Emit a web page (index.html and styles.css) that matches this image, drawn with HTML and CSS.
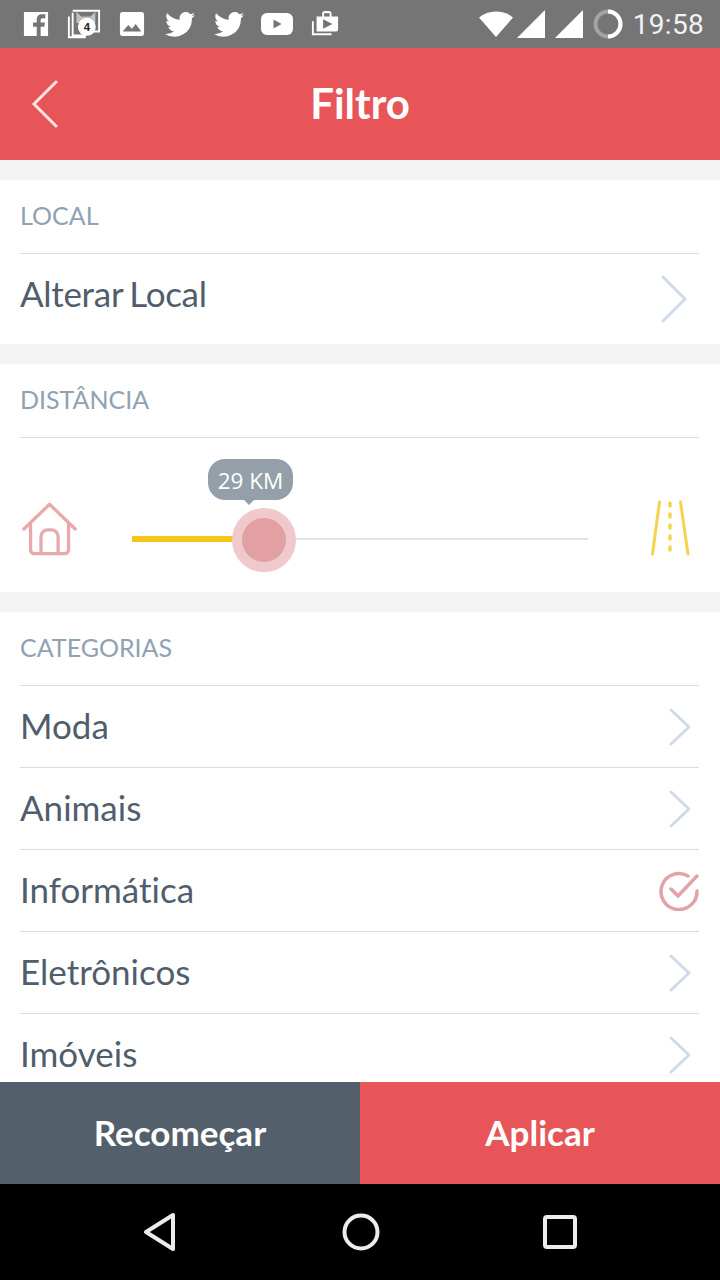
FILE: index.html
```html
<!DOCTYPE html>
<html>
<head>
    <title>Filtro</title>
    <link rel="stylesheet" href="styles.css">
</head>
<body>
    <div class="phone">
        <div class="status-bar">
            <div class="status-icons">
                <svg width="26" height="26" viewBox="0 0 28 28"><path fill="#fff" d="M1 1h26v26h-8V17h4l.6-4.500H19V10c0-1.500.6-2.300 2.300-2.300H24V3.600c-1-.1-2.200-.2-3.500-.2-3.500 0-5.700 2-5.700 5.800v3.300h-4V17h4v10H1z"/></svg>
                <svg width="34" height="30" viewBox="0 0 36 30"><path fill="none" stroke="#fff" stroke-width="2" d="M6 3v24h14M2 7v22h18M6 1h28v22H20"/><path fill="#fff" d="M10 2l5 5h10l5-5v12H10z" opacity=".55"/><circle cx="21" cy="18" r="9.500" fill="#fff"/><text x="21" y="22" class="badge-num">4</text></svg>
                <svg width="26" height="26" viewBox="0 0 28 28"><rect x="1" y="1" width="26" height="26" rx="3" fill="#fff"/><path fill="#757575" d="M4 22l6-7 4 4 4-5 6 8z"/></svg>
                <svg class="bird" width="30" height="25" viewBox="0 0 24 20"><path fill="#fff" d="M24 2.400c-.9.400-1.800.7-2.800.8 1-.6 1.800-1.600 2.200-2.700-1 .6-2 1-3.100 1.200A4.900 4.900 0 0 0 11.900 6.200C7.800 6 4.200 4 1.700 1 .4 3.200 1 6.100 3.200 7.600c-.8 0-1.600-.2-2.200-.6 0 2.300 1.600 4.400 3.900 4.900-.7.200-1.500.2-2.200.1.600 2 2.400 3.400 4.600 3.400A9.900 9.900 0 0 1 0 17.500 14 14 0 0 0 21.500 5c1-.7 1.800-1.600 2.500-2.600z"/></svg>
                <svg class="bird" width="30" height="25" viewBox="0 0 24 20"><path fill="#fff" d="M24 2.400c-.9.400-1.800.7-2.800.8 1-.6 1.800-1.600 2.200-2.700-1 .6-2 1-3.100 1.200A4.900 4.900 0 0 0 11.900 6.200C7.800 6 4.200 4 1.700 1 .4 3.200 1 6.100 3.200 7.600c-.8 0-1.600-.2-2.200-.6 0 2.300 1.600 4.400 3.900 4.900-.7.200-1.500.2-2.200.1.600 2 2.400 3.400 4.600 3.400A9.900 9.900 0 0 1 0 17.500 14 14 0 0 0 21.500 5c1-.7 1.800-1.600 2.500-2.600z"/></svg>
                <svg width="32" height="24" viewBox="0 0 32 24"><rect y="1" width="32" height="22" rx="6" fill="#fff"/><path fill="#757575" d="M12.500 7.500l8 4.500-8 4.500z"/></svg>
                <svg width="28" height="28" viewBox="0 0 30 30"><path fill="none" stroke="#fff" stroke-width="2" d="M2 12v14h20"/><path fill="#fff" d="M6 7h6V4c0-2 1-3 3-3h4c2 0 3 1 3 3v3h7v14a2 2 0 0 1-2 2H6z"/><path fill="#757575" d="M14 3.500h6V7h-6zM13 10l10 5-10 5z"/></svg>
            </div>
            <div class="status-right">
                <svg class="wifi" width="34" height="26" viewBox="0 0 34 26"><path fill="#fff" d="M0 6.500C9-1.500 25-1.500 34 6.500L17 26z"/></svg>
                <svg width="28" height="28" viewBox="0 0 28 28"><path fill="#fff" d="M28 0v28H0z"/></svg>
                <svg width="28" height="28" viewBox="0 0 28 28"><path fill="#fff" d="M28 0v28H0z"/></svg>
                <svg width="30" height="30" viewBox="0 0 30 30"><circle cx="15" cy="15" r="12.500" fill="none" stroke="#a3a3a3" stroke-width="4"/><path fill="none" stroke="#fff" stroke-width="4" d="M15 2.500a12.500 12.500 0 0 1 0 25"/></svg>
                <span class="clock">19:58</span>
            </div>
        </div>

        <div class="header">
            <svg class="back" width="28" height="48" viewBox="0 0 28 48"><path fill="none" stroke="#fde3e3" stroke-width="3" stroke-linecap="round" d="M25 2L3 24l22 22"/></svg>
            <h1>Filtro</h1>
        </div>

        <div class="content">
            <div class="section">
                <div class="section-title">LOCAL</div>
                <div class="row row-tall">
                    <span>Alterar Local</span>
                    <svg width="28" height="48" viewBox="0 0 28 48"><path class="chevron" d="M3 2l22 22L3 46"/></svg>
                </div>
            </div>

            <div class="section">
                <div class="section-title">DISTÂNCIA</div>
                <div class="distance">
                    <svg width="57" height="54" viewBox="0 0 60 56"><g fill="none" stroke="#e8a9ab" stroke-width="3.500" stroke-linecap="round" stroke-linejoin="round"><path d="M2 28L29 2l27 26"/><path d="M9 23v27a4 4 0 0 0 4 4h32a4 4 0 0 0 4-4V23"/><path d="M20 53V36a7 7 0 0 1 7-7h4a7 7 0 0 1 7 7v17"/></g></svg>
                    <div class="slider">
                        <div class="track-fill"></div>
                        <div class="thumb"></div>
                        <div class="bubble">29 KM</div>
                    </div>
                    <svg class="road" width="40" height="58" viewBox="0 0 40 58"><g fill="none" stroke="#f4d34f" stroke-width="3" stroke-linecap="round"><path d="M8.500 2L1.500 54M29.500 2L37 54"/><path stroke-width="3.500" stroke-dasharray="3 8" d="M19 3v52"/></g></svg>
                </div>
            </div>

            <div class="section">
                <div class="section-title">CATEGORIAS</div>
                <div class="row">
                    <span>Moda</span>
                    <svg class="small" width="22" height="38" viewBox="0 0 22 38"><path class="chevron" d="M2 2l18 17L2 36"/></svg>
                </div>
                <div class="row">
                    <span>Animais</span>
                    <svg class="small" width="22" height="38" viewBox="0 0 22 38"><path class="chevron" d="M2 2l18 17L2 36"/></svg>
                </div>
                <div class="row">
                    <span>Informática</span>
                    <svg class="check" width="40" height="40" viewBox="0 0 40 40"><g fill="none" stroke="#e3a3a6" stroke-width="3.500" stroke-linecap="round" stroke-linejoin="round"><path d="M29 5A18 18 0 1 0 38 20"/><path d="M12 18l7 7L38 5"/></g></svg>
                </div>
                <div class="row">
                    <span>Eletrônicos</span>
                    <svg class="small" width="22" height="38" viewBox="0 0 22 38"><path class="chevron" d="M2 2l18 17L2 36"/></svg>
                </div>
                <div class="row">
                    <span>Imóveis</span>
                    <svg class="small" width="22" height="38" viewBox="0 0 22 38"><path class="chevron" d="M2 2l18 17L2 36"/></svg>
                </div>
            </div>
        </div>

        <div class="actions">
            <button class="restart">Recomeçar</button>
            <button class="apply">Aplicar</button>
        </div>

        <div class="nav-bar">
            <svg width="36" height="40" viewBox="0 0 36 40"><path fill="none" stroke="#ececec" stroke-width="4" stroke-linejoin="round" d="M31 3v34L4 20z"/></svg>
            <svg width="38" height="38" viewBox="0 0 38 38"><circle cx="19" cy="19" r="16.500" fill="none" stroke="#ececec" stroke-width="4"/></svg>
            <svg width="34" height="34" viewBox="0 0 34 34"><rect x="2" y="2" width="30" height="30" rx="2" fill="none" stroke="#ececec" stroke-width="4"/></svg>
        </div>
    </div>
</body>
</html>
```

FILE: styles.css
```css
* {
    box-sizing: border-box;
}

body {
    margin: 0;
    font-family: Lato, "Open Sans", sans-serif;
    background-color: #fff;
}

.phone {
    display: flex;
    flex-direction: column;
    width: 720px;
    height: 1280px;
    overflow: hidden;
}

.status-bar {
    flex: 0 0 48px;
    display: flex;
    justify-content: space-between;
    align-items: center;
    padding: 0 16px 0 23px;
    background-color: #757575;
}

.status-icons {
    display: flex;
    align-items: center;
    gap: 18px;
}

.status-icons .bird {
    margin: 0 -1px 0 2px;
}

.badge-num {
    font-family: "Liberation Sans", sans-serif;
    font-size: 12px;
    font-weight: bold;
    text-anchor: middle;
    fill: #222;
}

.status-right {
    display: flex;
    align-items: center;
    gap: 10px;
}

.status-right .wifi {
    margin-right: -6px;
}

.clock {
    font-family: Roboto, sans-serif;
    font-size: 28px;
    letter-spacing: 0.3px;
    color: #f2f2f2;
}

.header {
    position: relative;
    flex: 0 0 112px;
    display: flex;
    justify-content: center;
    align-items: center;
    padding-bottom: 2px;
    background-color: #e85558;
}

.header h1 {
    margin: 0;
    font-size: 42px;
    font-weight: bold;
    color: #fff;
}

.back {
    position: absolute;
    left: 31px;
    top: 32px;
}

.content {
    flex: 1;
    min-height: 0;
    overflow: hidden;
    padding-top: 20px;
    background-color: #f3f3f3;
}

.section {
    padding: 0 21px 0 20px;
    margin-bottom: 20px;
    background-color: #fff;
}

.section-title {
    height: 74px;
    padding-top: 18px;
    font-size: 25px;
    line-height: 34px;
    color: #8fa2b3;
    border-bottom: 1px solid #dcdcdc;
}

.row {
    display: flex;
    justify-content: space-between;
    align-items: center;
    height: 82px;
    font-size: 35px;
    font-variant-ligatures: none;
    color: #505e6c;
    border-bottom: 1px solid #dcdcdc;
}

.row span {
    margin-bottom: 4px;
}

.row-tall {
    height: 90px;
    padding-right: 11px;
    border-bottom: none;
}

.row-tall span {
    margin-bottom: 12px;
    letter-spacing: -0.3px;
    word-spacing: -2px;
}

.row .small {
    margin-right: 8px;
}

.chevron {
    fill: none;
    stroke: #cfdbe8;
    stroke-width: 3;
    stroke-linecap: round;
    stroke-linejoin: round;
}

.distance {
    display: flex;
    align-items: center;
    height: 154px;
    padding: 28px 8px 0 2px;
}

.slider {
    position: relative;
    width: 456px;
    height: 2px;
    margin: 20px 0 0 53px;
    background-color: #e2e2e2;
}

.road {
    margin-left: auto;
}

.track-fill {
    position: absolute;
    left: 0;
    top: -2px;
    width: 104px;
    height: 6px;
    background-color: #f5c518;
}

.thumb {
    position: absolute;
    left: 100px;
    top: -30px;
    width: 64px;
    height: 64px;
    border: 10px solid #f0c9ca;
    border-radius: 50%;
    background-color: #e2a0a3;
}

.bubble {
    position: absolute;
    left: 76px;
    top: -79px;
    width: 85px;
    height: 41px;
    border-radius: 17px;
    font-family: "Open Sans", sans-serif;
    font-size: 22.5px;
    line-height: 44px;
    text-align: center;
    color: #fff;
    background-color: #949fa9;
}

.bubble::after {
    content: "";
    position: absolute;
    left: 36px;
    bottom: -5px;
    border-left: 5px solid transparent;
    border-right: 5px solid transparent;
    border-top: 5px solid #949fa9;
}

.actions {
    flex: 0 0 102px;
    display: flex;
}

.actions button {
    flex: 1;
    border: none;
    padding: 0 0 2px;
    font-family: inherit;
    font-size: 35px;
    font-weight: bold;
    color: #fff;
}

.restart {
    background-color: #535f6a;
}

.apply {
    background-color: #e85558;
}

.nav-bar {
    flex: 0 0 96px;
    display: flex;
    justify-content: space-between;
    align-items: center;
    padding: 0 143px 0 142px;
    background-color: #000;
}
```
